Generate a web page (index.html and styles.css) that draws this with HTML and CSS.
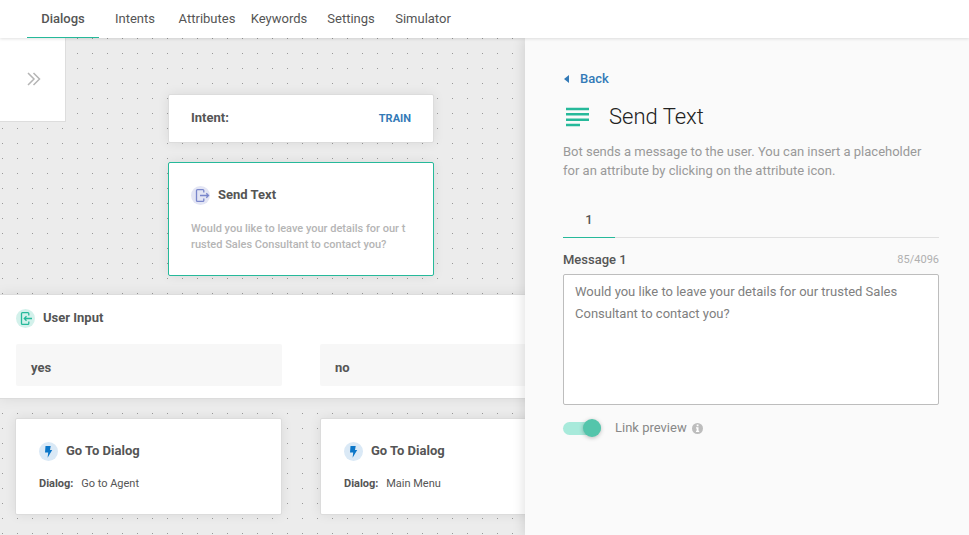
FILE: index.html
```html
<!DOCTYPE html>
<html lang="en">
<head>
  <meta charset="UTF-8">
  <meta name="viewport" content="width=device-width, initial-scale=1.0">
  <title>Dialogs</title>
  <link rel="stylesheet" href="styles.css">
</head>
<body>
<nav class="topnav">
  <a class="active" href="#dialogs">Dialogs</a>
  <a href="#intents">Intents</a>
  <a href="#attributes">Attributes</a>
  <a href="#keywords">Keywords</a>
  <a href="#settings">Settings</a>
  <a href="#simulator">Simulator</a>
</nav>

<div class="workspace">
  <main class="canvas">
    <button class="expand" aria-label="Expand dialog list">
      <svg width="14" height="14" viewBox="0 0 14 14"><path d="M1 1l6 6-6 6M6.5 1l6 6-6 6" fill="none" stroke="#b5b5b5" stroke-width="1.5"/></svg>
    </button>

    <section class="node node-intent">
      <h2>Intent:</h2>
      <button class="train">TRAIN</button>
    </section>

    <section class="node node-text selected">
      <header class="node-head">
        <span class="badge badge-send">
          <svg width="19" height="19" viewBox="0 0 19 19" fill="none" stroke="#7986cb" stroke-width="1.3"><path d="M12.8 6.5V4.6a1 1 0 0 0-1-1H6.5a1 1 0 0 0-1 1v9.8a1 1 0 0 0 1 1h5.3a1 1 0 0 0 1-1v-1.9M9 9.500h8M15.3 7.3l2.2 2.2-2.2 2.2"/></svg>
        </span>
        <h2>Send Text</h2>
      </header>
      <p>Would you like to leave your details for our trusted Sales Consultant to contact you?</p>
    </section>

    <section class="node node-input">
      <header class="node-head">
        <span class="badge badge-input">
          <svg width="19" height="19" viewBox="0 0 19 19" fill="none" stroke="#26b99a" stroke-width="1.3"><path d="M12.8 6.5V4.6a1 1 0 0 0-1-1H6.5a1 1 0 0 0-1 1v9.8a1 1 0 0 0 1 1h5.3a1 1 0 0 0 1-1v-1.9M16 9.500H8.5M10.5 7.3L8.3 9.5l2.2 2.2"/></svg>
        </span>
        <h2>User Input</h2>
      </header>
      <div class="options">
        <div class="option">yes</div>
        <div class="option">no</div>
      </div>
    </section>

    <section class="node node-goto goto-agent">
      <header class="node-head">
        <span class="badge badge-goto">
          <svg width="19" height="19" viewBox="0 0 19 19"><path d="M6.5 4h5.2l-.7 4h2.2L8.6 15.8l.6-5.3H6z" fill="#0b76c8"/></svg>
        </span>
        <h2>Go To Dialog</h2>
      </header>
      <p><b>Dialog:</b> Go to Agent</p>
    </section>

    <section class="node node-goto goto-menu">
      <header class="node-head">
        <span class="badge badge-goto">
          <svg width="19" height="19" viewBox="0 0 19 19"><path d="M6.5 4h5.2l-.7 4h2.2L8.6 15.8l.6-5.3H6z" fill="#0b76c8"/></svg>
        </span>
        <h2>Go To Dialog</h2>
      </header>
      <p><b>Dialog:</b> Main Menu</p>
    </section>
  </main>

  <aside class="panel">
    <a class="back" href="#dialogs">
      <svg width="5" height="8" viewBox="0 0 5 8"><path d="M5 0v8L0 4z" fill="#337ab7"/></svg>
      Back
    </a>
    <div class="panel-title">
      <svg width="24" height="20" viewBox="0 0 24 20"><path d="M1 2h23M1 7.300h23M1 12.700h23M1 18h14" stroke="#26b99a" stroke-width="2.500"/></svg>
      <h1>Send Text</h1>
    </div>
    <p class="desc">Bot sends a message to the user. You can insert a placeholder for an attribute by clicking on the attribute icon.</p>
    <div class="tabs">
      <button class="tab">1</button>
    </div>
    <div class="field-head">
      <label for="message">Message 1</label>
      <span class="counter">85/4096</span>
    </div>
    <textarea id="message">Would you like to leave your details for our trusted Sales Consultant to contact you?</textarea>
    <div class="preview">
      <input type="checkbox" class="switch" id="preview" checked>
      <label for="preview">Link preview</label>
      <svg width="11" height="11" viewBox="0 0 11 11"><circle cx="5.5" cy="5.5" r="5.5" fill="#bdbdbd"/><path d="M4.7 1.6h1.8v1.6H4.7zM4 4.3h2.5v3.5h.7v1.1H4V7.8h.7V5.4H4z" fill="#fff"/></svg>
    </div>
  </aside>
</div>
</body>
</html>
```

FILE: styles.css
```css
* {
  box-sizing: border-box;
}
body {
  margin: 0;
  height: 100vh;
  display: flex;
  flex-direction: column;
  overflow: hidden;
  font-family: Roboto, "Liberation Sans", sans-serif;
  font-size: 13px;
  color: #555;
}
h1, h2, p {
  margin: 0;
}
button {
  font: inherit;
  border: 0;
  padding: 0;
  cursor: pointer;
}
a {
  text-decoration: none;
}
svg {
  flex: none;
  display: block;
}

/* top navigation */
.topnav {
  position: relative;
  z-index: 3;
  display: flex;
  height: 38px;
  padding-left: 27px;
  background: #fff;
  box-shadow: 0 1px 3px rgba(0,0,0,0.12);
}
.topnav a {
  width: 72px;
  line-height: 37px;
  text-align: center;
  color: #555;
  border-bottom: 1px solid transparent;
}
.topnav a.active {
  font-weight: 500;
  border-bottom-color: #26b99a;
}

.workspace {
  flex: 1;
  display: flex;
  min-height: 0;
}

/* flow canvas, nodes are placed by hand */
.canvas {
  position: relative;
  flex: 1;
  overflow: hidden;
  background: conic-gradient(from 90deg at 14px 14px, #999 90deg, #ececec 0) 3px 1px / 15px 15px;
}
.expand {
  position: absolute;
  top: 0;
  left: 0;
  width: 66px;
  height: 84px;
  padding: 0 0 2px 27px;
  background: #fff;
  border: 1px solid #ddd;
  border-width: 0 1px 1px 0;
}
.node {
  position: absolute;
  background: #fff;
  border: 1px solid #dcdcdc;
  border-radius: 2px;
  box-shadow: 0 0 12px rgba(0,0,0,0.08);
}
.node h2 {
  font-size: 13px;
  font-weight: 700;
  line-height: 20px;
}
.node p {
  font-size: 11px;
  line-height: 16px;
}
.node-head {
  display: flex;
  align-items: center;
  gap: 8px;
}
.node.selected {
  border-color: #26b99a;
}
.node-intent {
  top: 56px;
  left: 168px;
  width: 266px;
  padding: 13px 22px 14px;
  display: flex;
  justify-content: space-between;
  align-items: center;
}
.train {
  background: none;
  color: #337ab7;
  font-size: 11px;
  font-weight: 700;
}
.node-text {
  top: 124px;
  left: 168px;
  width: 266px;
  padding: 22px 26px 22px 22px;
}
.node-text p {
  margin-top: 16px;
  color: #b5b5b5;
  font-weight: 500;
  word-break: break-all;
}
.node-input {
  top: 256px;
  left: 0;
  width: 602px;
  padding: 13px 16px 12px;
  border-width: 1px 0;
  border-radius: 0;
}
.options {
  display: flex;
  gap: 38px;
  margin-top: 16px;
}
.option {
  flex: 1;
  padding: 14px 15px 8px;
  background: #f7f7f7;
  border-radius: 2px;
  font-weight: 700;
  line-height: 20px;
}
.node-goto {
  top: 380px;
  width: 267px;
  padding: 22px 23px;
}
.node-goto p {
  margin-top: 15px;
}
.node-goto b {
  margin-right: 5px;
}
.goto-agent {
  left: 15px;
}
.goto-menu {
  left: 320px;
}
.badge {
  width: 19px;
  height: 19px;
  border-radius: 50%;
}
.badge-send {
  background: #e3e5f4;
}
.badge-input {
  background: #d3f1eb;
}
.badge-goto {
  background: #dae9f6;
}

/* edit panel */
.panel {
  position: relative;
  z-index: 2;
  width: 444px;
  padding: 31px 30px 0 38px;
  background: #fafafa;
  box-shadow: 0 0 12px rgba(0,0,0,0.15);
}
.back {
  display: flex;
  align-items: center;
  gap: 11px;
  padding-left: 1px;
  color: #337ab7;
  font-weight: 500;
  line-height: 20px;
}
.panel-title {
  display: flex;
  align-items: center;
  gap: 20px;
  margin-top: 12px;
  padding-left: 2px;
}
.panel-title h1 {
  font-size: 22px;
  font-weight: 300;
  line-height: 32px;
  color: #222;
}
.desc {
  margin-top: 9px;
  line-height: 19px;
  color: #999;
}
.tabs {
  display: flex;
  margin-top: 22px;
  border-bottom: 1px solid #e0e0e0;
}
.tab {
  width: 52px;
  height: 36px;
  margin-bottom: -1px;
  background: none;
  color: #555;
  font-weight: 500;
  border-bottom: 1px solid #26b99a;
}
.field-head {
  display: flex;
  justify-content: space-between;
  align-items: center;
  margin-top: 12px;
  line-height: 20px;
}
.field-head label {
  font-weight: 500;
}
.counter {
  font-size: 11px;
  color: #b0b0b0;
}
textarea {
  display: block;
  width: 100%;
  height: 131px;
  margin-top: 4px;
  padding: 6px 11px;
  border: 1px solid #bdbdbd;
  border-radius: 2px;
  background: #fff;
  color: #808080;
  font: inherit;
  line-height: 22px;
  resize: none;
  outline: 0;
}
.preview {
  display: flex;
  align-items: center;
  margin-top: 13px;
  line-height: 20px;
  color: #888;
}
.preview label {
  margin: 0 5px 0 14px;
}
.switch {
  appearance: none;
  position: relative;
  width: 38px;
  height: 13px;
  margin: 0;
  border-radius: 7px;
  background: #d5d5d5;
}
.switch::before {
  content: "";
  position: absolute;
  top: -3px;
  left: 0;
  width: 18px;
  height: 18px;
  border-radius: 50%;
  background: #fff;
  box-shadow: 0 1px 4px rgba(0,0,0,0.25);
}
.switch:checked {
  background: #a8eadb;
}
.switch:checked::before {
  left: 20px;
  background: #54c5ab;
}
```
